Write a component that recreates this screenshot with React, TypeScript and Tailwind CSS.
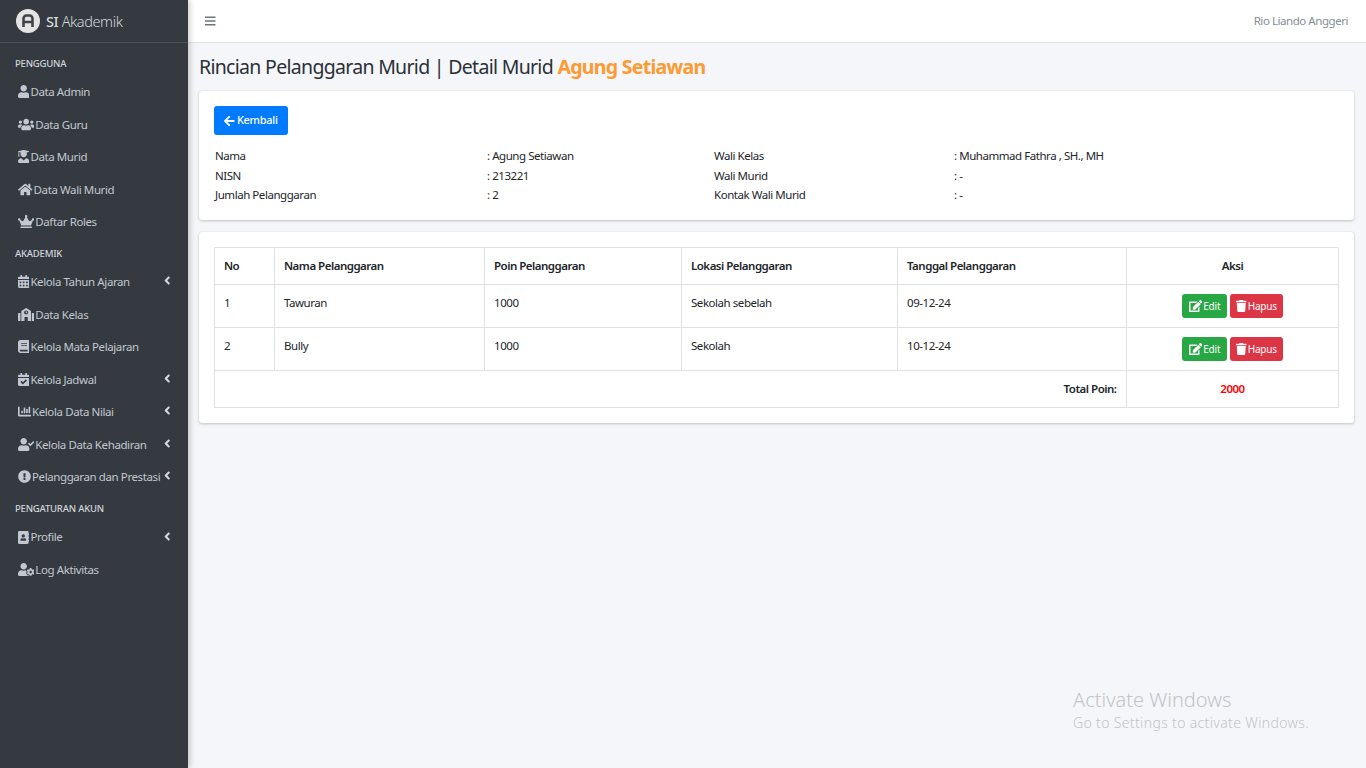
import React from "react";
import type { IconType } from "react-icons";
import {
  FaAddressBook,
  FaAngleLeft,
  FaArrowLeft,
  FaBars,
  FaBook,
  FaCalendarAlt,
  FaCalendarCheck,
  FaChartBar,
  FaCrown,
  FaEdit,
  FaExclamationCircle,
  FaHome,
  FaSchool,
  FaTrash,
  FaUser,
  FaUserCheck,
  FaUserCog,
  FaUserGraduate,
  FaUsers,
} from "react-icons/fa";

type NavItem = { label: string; icon: IconType; iconW: string; caret?: boolean };
type NavGroup = { title: string; items: NavItem[] };

// icon widths follow the glyph's own aspect ratio at 13px tall
const NAV: NavGroup[] = [
  {
    title: "PENGGUNA",
    items: [
      { label: "Data Admin", icon: FaUser, iconW: "w-[11.4px]" },
      { label: "Data Guru", icon: FaUsers, iconW: "w-[16.3px]" },
      { label: "Data Murid", icon: FaUserGraduate, iconW: "w-[11.4px]" },
      { label: "Data Wali Murid", icon: FaHome, iconW: "w-[14.6px]" },
      { label: "Daftar Roles", icon: FaCrown, iconW: "w-[16.3px]" },
    ],
  },
  {
    title: "AKADEMIK",
    items: [
      { label: "Kelola Tahun Ajaran", icon: FaCalendarAlt, iconW: "w-[11.4px]", caret: true },
      { label: "Data Kelas", icon: FaSchool, iconW: "w-[16.3px]" },
      { label: "Kelola Mata Pelajaran", icon: FaBook, iconW: "w-[11.4px]" },
      { label: "Kelola Jadwal", icon: FaCalendarCheck, iconW: "w-[11.4px]", caret: true },
      { label: "Kelola Data Nilai", icon: FaChartBar, iconW: "w-[13px]", caret: true },
      { label: "Kelola Data Kehadiran", icon: FaUserCheck, iconW: "w-[16.3px]", caret: true },
      { label: "Pelanggaran dan Prestasi", icon: FaExclamationCircle, iconW: "w-[13px]", caret: true },
    ],
  },
  {
    title: "PENGATURAN AKUN",
    items: [
      { label: "Profile", icon: FaAddressBook, iconW: "w-[11.4px]", caret: true },
      { label: "Log Aktivitas", icon: FaUserCog, iconW: "w-[16.3px]" },
    ],
  },
];

const VIOLATIONS = [
  { no: 1, name: "Tawuran", poin: 1000, lokasi: "Sekolah sebelah", tanggal: "09-12-24" },
  { no: 2, name: "Bully", poin: 1000, lokasi: "Sekolah", tanggal: "10-12-24" },
];

const INFO = [
  ["Nama", ": Agung Setiawan", "Wali Kelas", ": Muhammad Fathra , SH., MH"],
  ["NISN", ": 213221", "Wali Murid", ": -"],
  ["Jumlah Pelanggaran", ": 2", "Kontak Wali Murid", ": -"],
];

const Sidebar = () => (
  <aside className="w-[188px] shrink-0 bg-[#343a40] text-[#c2c7d0] shadow-[2px_0_6px_rgba(0,0,0,0.2)] z-10">
    <div className="h-[43px] flex items-center pl-4 gap-[6px] border-b border-[#4b545c]">
      <svg width="24" height="24" viewBox="0 0 24 24" className="shrink-0">
        <circle cx="12" cy="12" r="12" fill="#e4e4e4" />
        <path
          d="M7.5 18V9.5A3 3 0 0 1 10.5 6.5h3a3 3 0 0 1 3 3V18M7.5 13h9"
          fill="none"
          stroke="#3f4449"
          strokeWidth="2.6"
        />
      </svg>
      <span className="text-[14.5px] leading-none font-light tracking-[-0.4px] text-[#d5d8dd]">
        <span className="font-medium">SI</span> Akademik
      </span>
    </div>
    <nav className="pt-[5px]">
      {NAV.map((group) => (
        <div key={group.title}>
          <div className="h-[27.6px] pt-[4px] pl-[15px] flex items-center text-[9.5px] font-medium tracking-[-0.2px] text-[#d0d4db]">
            {group.title}
          </div>
          {group.items.map((item) => (
            <div
              key={item.label}
              className="h-[32.5px] pl-[18px] pr-[18px] flex items-center gap-[1px] text-[11.5px] tracking-[-0.4px] whitespace-nowrap"
            >
              <item.icon className={`h-[13px] ${item.iconW} shrink-0 text-[#c2c7d0]`} />
              <span className="flex-1">{item.label}</span>
              {item.caret && <FaAngleLeft className="h-[13px] w-[6.5px] -mt-[2px] shrink-0 text-[#d5d8dd]" />}
            </div>
          ))}
        </div>
      ))}
    </nav>
  </aside>
);

const Topbar = () => (
  <header className="h-[43px] bg-white border-b border-[#dee2e6] flex items-center justify-between pl-[17px] pr-[18px]">
    <FaBars className="h-[12px] w-[10.5px] text-[#6c757d]" />
    <span className="text-[11.5px] tracking-[-0.45px] text-[#868e96]">Rio Liando Anggeri</span>
  </header>
);

const cardClass = "bg-white rounded-[3px] shadow-[0_0_1px_rgba(0,0,0,0.13),0_1px_3px_rgba(0,0,0,0.2)]";
const thClass = "border border-[#dee2e6] px-[9px] font-semibold tracking-[-0.5px] align-middle";
const tdClass = "border border-[#dee2e6] px-[9px] pt-[9px] align-top";

const ActionButtons = () => (
  <div className="flex justify-center gap-[3px]">
    <button className="h-6 w-[45px] rounded-[3px] bg-[#28a745] text-white text-[10px] tracking-[-0.2px] flex items-center justify-center gap-[1px]">
      <FaEdit className="h-[12px] w-[13.5px]" />
      Edit
    </button>
    <button className="h-6 w-[53px] rounded-[3px] bg-[#dc3545] text-white text-[10px] tracking-[-0.2px] flex items-center justify-center gap-[1px]">
      <FaTrash className="h-[12px] w-[10.5px]" />
      Hapus
    </button>
  </div>
);

const App = () => (
  <div
    className="relative flex h-[768px] w-[1366px] overflow-hidden bg-[#f4f6f9] text-[#212529]"
    style={{ fontFamily: '"Noto Sans", sans-serif' }}
  >
    <Sidebar />
    <main className="flex-1 min-w-0">
      <Topbar />
      <div className="pl-[11px] pr-[12px]">
        <h1 className="h-[48px] flex items-center text-[19.5px] tracking-[-0.7px] text-[#2b3036] whitespace-pre">
          Rincian Pelanggaran Murid | Detail Murid{" "}
          <span className="font-bold text-[#fd9a32]">Agung Setiawan</span>
        </h1>
        <section className={`${cardClass} h-[129px] px-[15px] pt-[15px]`}>
          <button className="h-[29px] w-[74px] rounded-[3px] bg-[#007bff] text-white text-[11px] tracking-[-0.3px] font-medium flex items-center justify-center gap-[2px]">
            <FaArrowLeft className="h-[12px] w-[10.5px]" />
            Kembali
          </button>
          <div className="mt-[11px] pl-px grid grid-cols-[272px_227px_240px_1fr] text-[11.5px] tracking-[-0.45px] leading-[19.5px]">
            {INFO.flat().map((text, i) => (
              <div key={i}>{text}</div>
            ))}
          </div>
        </section>
        <section className={`${cardClass} mt-[12px] h-[191px] p-[15px]`}>
          <table className="w-[1125px] table-fixed border-collapse text-[11.5px] tracking-[-0.45px]">
            <colgroup>
              <col className="w-[60px]" />
              <col className="w-[210px]" />
              <col className="w-[197px]" />
              <col className="w-[216px]" />
              <col className="w-[229px]" />
              <col className="w-[212px]" />
            </colgroup>
            <thead>
              <tr className="h-[37px]">
                <th className={`${thClass} text-left`}>No</th>
                <th className={`${thClass} text-left`}>Nama Pelanggaran</th>
                <th className={`${thClass} text-left`}>Poin Pelanggaran</th>
                <th className={`${thClass} text-left`}>Lokasi Pelanggaran</th>
                <th className={`${thClass} text-left`}>Tanggal Pelanggaran</th>
                <th className={`${thClass} text-center`}>Aksi</th>
              </tr>
            </thead>
            <tbody>
              {VIOLATIONS.map((row) => (
                <tr key={row.no} className="h-[43px]">
                  <td className={tdClass}>{row.no}</td>
                  <td className={tdClass}>{row.name}</td>
                  <td className={tdClass}>{row.poin}</td>
                  <td className={tdClass}>{row.lokasi}</td>
                  <td className={tdClass}>{row.tanggal}</td>
                  <td className="border border-[#dee2e6] align-middle">
                    <ActionButtons />
                  </td>
                </tr>
              ))}
              <tr className="h-[37px] font-semibold tracking-[-0.5px]">
                <td colSpan={5} className="border border-[#dee2e6] px-[9.5px] text-right">
                  Total Poin:
                </td>
                <td className="border border-[#dee2e6] text-center text-[#ff0000]">2000</td>
              </tr>
            </tbody>
          </table>
        </section>
      </div>
    </main>
    <div className="absolute left-[1073px] top-[687px] text-[#c2c4c8] pointer-events-none">
      <div className="text-[20px] font-light leading-[26px]">Activate Windows</div>
      <div className="text-[14px] font-light tracking-[0.35px] leading-[20px]">Go to Settings to activate Windows.</div>
    </div>
  </div>
);

export default App;
